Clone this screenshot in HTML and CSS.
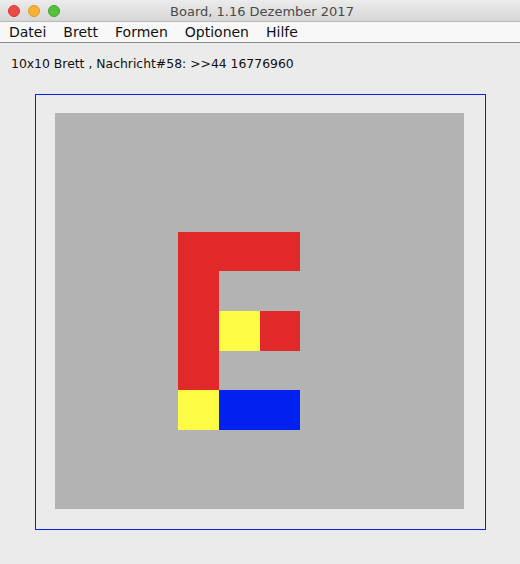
FILE: index.html
```html
<!DOCTYPE html>
<html lang="de">
<head>
<meta charset="utf-8">
<title>Board, 1.16 Dezember 2017</title>
<link rel="stylesheet" href="styles.css">
</head>
<body>
<div class="window">
  <div class="titlebar">
    <div class="lights">
      <span class="light red"></span>
      <span class="light yellow"></span>
      <span class="light green"></span>
    </div>
    <div class="title">Board, 1.16 Dezember 2017</div>
  </div>
  <div class="menubar">
    <span class="menu">Datei</span>
    <span class="menu">Brett</span>
    <span class="menu">Formen</span>
    <span class="menu">Optionen</span>
    <span class="menu">Hilfe</span>
  </div>
  <div class="status">10x10 Brett , Nachricht#58: &gt;&gt;44 16776960</div>
  <div class="panel">
    <div class="board">
      <div class="cell red c3 r3"></div>
      <div class="cell red c4 r3"></div>
      <div class="cell red c5 r3"></div>
      <div class="cell red c3 r4"></div>
      <div class="cell red c3 r5"></div>
      <div class="cell yel c4 r5"></div>
      <div class="cell red c5 r5"></div>
      <div class="cell red c3 r6"></div>
      <div class="cell yel c3 r7"></div>
      <div class="cell blu c4 r7"></div>
      <div class="cell blu c5 r7"></div>
    </div>
  </div>
</div>
</body>
</html>
```
FILE: styles.css
```css
html, body {
  margin: 0;
  padding: 0;
}
body {
  width: 520px;
  height: 564px;
  background: #ebebeb;
  overflow: hidden;
  font-family: "DejaVu Sans", "Liberation Sans", sans-serif;
}
.window {
  display: flex;
  flex-direction: column;
  height: 564px;
}
.titlebar {
  position: relative;
  height: 21px;
  background: linear-gradient(#ececec, #d6d6d6);
  border-bottom: 1px solid #b9b9b9;
  display: flex;
  align-items: center;
  justify-content: center;
}
.lights {
  position: absolute;
  left: 8px;
  top: 5px;
  display: flex;
  gap: 8px;
}
.light {
  width: 12px;
  height: 12px;
  border-radius: 50%;
  box-sizing: border-box;
}
.light.red { background: #ec4a45; border: 1px solid #d33a35; }
.light.yellow { background: #f5b236; border: 1px solid #dc9b26; }
.light.green { background: #56c03c; border: 1px solid #3fa82a; }
.title {
  font-size: 13px;
  color: #4a4a4a;
  padding-top: 1px;
  padding-left: 4px;
}
.menubar {
  height: 20px;
  background: #f8f8f8;
  border-bottom: 1px solid #8c8c8c;
  display: flex;
  align-items: center;
  padding-left: 9px;
  gap: 17px;
}
.menu {
  font-size: 14px;
  color: #111;
}
.status {
  font-size: 12.4px;
  color: #111;
  padding: 13px 0 0 11px;
  height: 18px;
}
.panel {
  margin: 20px 0 0 35px;
  border: 1px solid #0022e4;
  padding: 18px 21px 20px 19px;
  width: 409px;
  height: 396px;
}
.board {
  width: 409px;
  height: 396px;
  background: #b3b3b3;
  display: grid;
  grid-template-columns: repeat(10, 1fr);
  grid-template-rows: repeat(10, 1fr);
}
.cell.red { background: #e2292a; }
.cell.yel { background: #fffc45; }
.cell.blu { background: #0021ef; }
.c3 { grid-column: 4; }
.c4 { grid-column: 5; }
.c5 { grid-column: 6; }
.r3 { grid-row: 4; }
.r4 { grid-row: 5; }
.r5 { grid-row: 6; }
.r6 { grid-row: 7; }
.r7 { grid-row: 8; }
```
